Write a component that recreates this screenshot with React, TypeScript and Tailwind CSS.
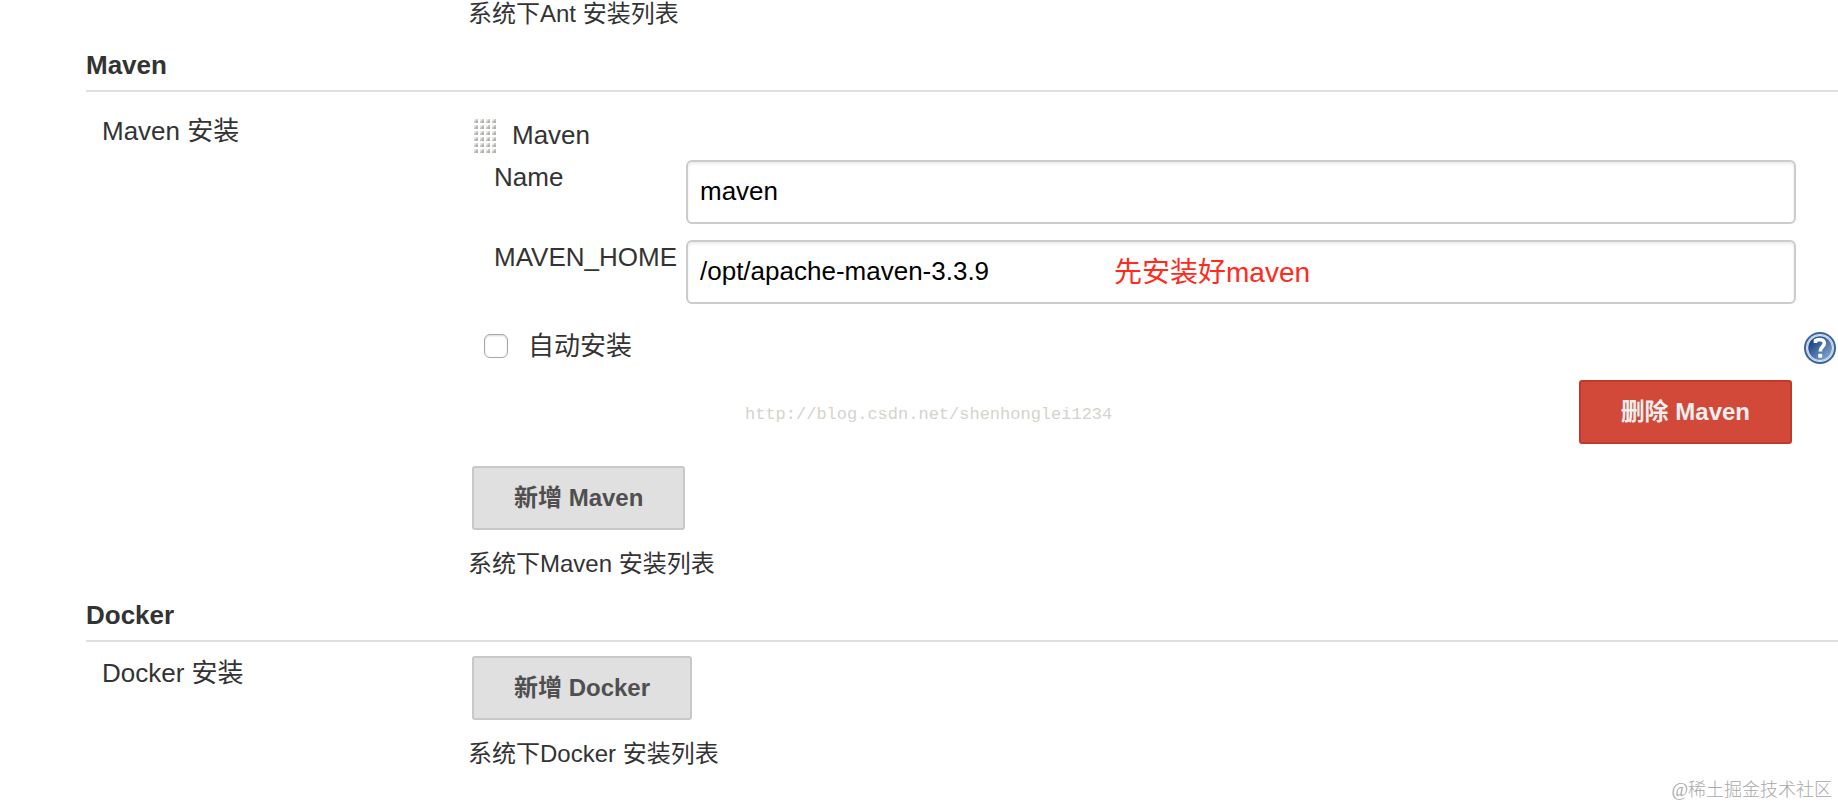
import React, { useId, useState } from "react"

type SectionProps = {
  title: string
  children: React.ReactNode
}

type TextFieldProps = {
  label: string
  defaultValue: string
  note?: string
}

const HANDLE_COLUMNS = [0, 6, 12, 18]
const HANDLE_ROWS = [0, 6, 12, 18, 24, 30]

const DragHandle = () => (
  <svg className="h-9 w-6 shrink-0 cursor-move" viewBox="0 0 24 36" aria-hidden="true">
    {HANDLE_ROWS.map(y =>
      HANDLE_COLUMNS.map(x => (
        <g key={`${x}-${y}`}>
          <rect x={x} y={y + 1} width="4" height="4" fill="#ececea" />
          <path d={`M${x} ${y + 5}V${y + 4}L${x + 3} ${y + 1}H${x + 4}V${y + 5}Z`} fill="#c4c4c0" />
          <rect x={x + 2} y={y + 3} width="2" height="2" fill="#b0b0ac" />
        </g>
      ))
    )}
  </svg>
)

const HelpIcon = () => (
  <svg className="h-8 w-8" viewBox="0 0 32 32" aria-hidden="true">
    <defs>
      <linearGradient id="help-fill" x1="0" y1="0" x2="1" y2="1">
        <stop offset="0.2" stopColor="#1d4a87" />
        <stop offset="1" stopColor="#8fb0da" />
      </linearGradient>
    </defs>
    <circle cx="16" cy="16" r="16" fill="#3a639c" />
    <circle cx="16" cy="16" r="14" fill="#d5e0ee" />
    <circle cx="16" cy="16" r="13" fill="#7f9dc6" />
    <circle cx="16" cy="16" r="12.5" fill="none" stroke="#e4ecf5" strokeWidth="1" />
    <circle cx="16" cy="16" r="11.5" fill="url(#help-fill)" />
    <path
      d="M11.5 11V8.5C14 7.2 20.3 6.8 20.3 11.2C20.3 14.6 16.3 14.6 16.3 19.5"
      fill="none"
      stroke="#fff"
      strokeWidth="3.6"
    />
    <rect x="14.2" y="21.8" width="4" height="4" rx="0.8" fill="#fff" />
  </svg>
)

const Section = ({ title, children }: SectionProps) => (
  <section className="mt-[21px]">
    <h2 className="border-b-2 border-[#e0e0e0] pb-[9px] text-[26px] leading-8 font-bold">{title}</h2>
    {children}
  </section>
)

const AddButton = ({ children }: { children: React.ReactNode }) => (
  <button
    type="button"
    className="block h-16 rounded-[3px] border-2 border-[#c8c8c8] bg-[#e0e0e0] px-10 text-2xl font-bold text-[#4f4f4f]">
    {children}
  </button>
)

const HelpText = ({ children }: { children: React.ReactNode }) => (
  <p className="-ml-1 text-2xl leading-7">{children}</p>
)

const TextField = ({ label, defaultValue, note }: TextFieldProps) => {
  const id = useId()

  return (
    <div className="flex pr-[42px] pl-[22px]">
      <label htmlFor={id} className="w-48 shrink-0 pt-px">
        {label}
      </label>
      <div className="relative flex-1">
        <input
          id={id}
          type="text"
          defaultValue={defaultValue}
          className="block h-16 w-full rounded-md border-2 border-[#ccc] bg-white px-3 pb-0.5 text-black shadow-[inset_0_2px_3px_rgba(0,0,0,0.08)]"
        />
        {note && (
          <span className="pointer-events-none absolute top-[17px] left-[428px] text-[28px] leading-8 text-[#ff2a1c]">
            {note}
          </span>
        )}
      </div>
    </div>
  )
}

const MavenInstallation = () => {
  const [autoInstall, setAutoInstall] = useState(false)

  return (
    <div>
      <div className="flex h-11 gap-3.5 pt-0.5 pl-0.5">
        <DragHandle />
        <span className="pt-px">Maven</span>
      </div>
      <div className="flex flex-col gap-4">
        <TextField label="Name" defaultValue="maven" />
        <TextField label="MAVEN_HOME" defaultValue="/opt/apache-maven-3.3.9" note="先安装好maven" />
      </div>
      <div className="mt-6 flex justify-between pr-0.5 pl-3">
        <label className="flex h-9 items-center gap-5 pb-px">
          <input
            type="checkbox"
            checked={autoInstall}
            onChange={e => setAutoInstall(e.target.checked)}
            className="h-6 w-6 appearance-none rounded-md border border-[#a6a6a6] bg-white shadow-[inset_0_1px_2px_rgba(0,0,0,0.15)] checked:bg-[#4a7fd0]"
          />
          自动安装
        </label>
        <button type="button" aria-label="帮助" className="pt-1">
          <HelpIcon />
        </button>
      </div>
      <div className="mt-4 flex justify-end pr-[46px]">
        <button
          type="button"
          className="h-16 rounded-[3px] border-2 border-[#c0392b] bg-[#d24939] px-10 text-2xl font-bold text-[#eee]">
          删除 Maven
        </button>
      </div>
    </div>
  )
}

const App = () => {
  return (
    <main className="relative min-h-screen overflow-hidden bg-white pb-9 pl-[86px] font-['Liberation_Sans','Noto_Sans_CJK_SC',sans-serif] text-[26px] leading-8 text-[#333]">
      <div className="pl-[386px]">
        <HelpText>系统下Ant 安装列表</HelpText>
      </div>

      <Section title="Maven">
        <div className="flex pt-6">
          <h3 className="-mt-px w-[386px] shrink-0 pl-4">Maven 安装</h3>
          <div className="flex-1">
            <MavenInstallation />
            <div className="mt-[22px] flex flex-col items-start gap-5">
              <AddButton>新增 Maven</AddButton>
              <HelpText>系统下Maven 安装列表</HelpText>
            </div>
          </div>
        </div>
      </Section>

      <Section title="Docker">
        <div className="flex pt-3.5">
          <h3 className="w-[386px] shrink-0 pt-px pl-4">Docker 安装</h3>
          <div className="flex flex-1 flex-col items-start gap-5">
            <AddButton>新增 Docker</AddButton>
            <HelpText>系统下Docker 安装列表</HelpText>
          </div>
        </div>
      </Section>

      <span className="pointer-events-none absolute top-[403px] left-[745px] font-['Liberation_Mono',monospace] text-[17px] leading-6 text-[#d4d4cc]">
        http://blog.csdn.net/shenhonglei1234
      </span>
      <span className="pointer-events-none absolute right-1.5 bottom-1 font-['Liberation_Serif','Noto_Sans_CJK_SC',serif] text-lg leading-6 font-light text-[#a8a8a8]">
        @稀土掘金技术社区
      </span>
    </main>
  )
}

export default App
